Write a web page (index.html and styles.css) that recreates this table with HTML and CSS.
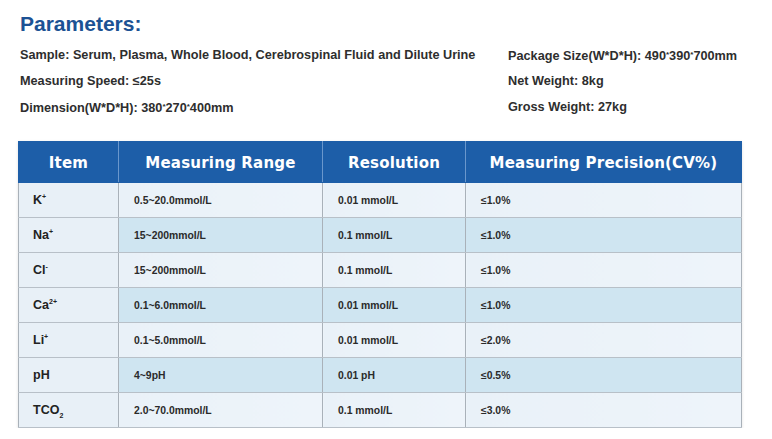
FILE: index.html
```html
<!DOCTYPE html>
<html lang="en">
<head>
<meta charset="utf-8">
<title>Parameters</title>
<link rel="stylesheet" href="styles.css">
</head>
<body>
<div class="page">
  <h1 class="title">Parameters:</h1>
  <div class="params">
    <div class="param">Sample: Serum, Plasma, Whole Blood, Cerebrospinal Fluid and Dilute Urine</div>
    <div class="param">Package Size(W*D*H): 490<span class="dot">*</span>390<span class="dot">*</span>700mm</div>
    <div class="param">Measuring Speed: ≤25s</div>
    <div class="param">Net Weight: 8kg</div>
    <div class="param">Dimension(W*D*H): 380<span class="dot">*</span>270<span class="dot">*</span>400mm</div>
    <div class="param">Gross Weight: 27kg</div>
  </div>
  <table class="spec">
    <colgroup>
      <col class="c1"><col class="c2"><col class="c3"><col class="c4">
    </colgroup>
    <thead>
      <tr><th>Item</th><th>Measuring Range</th><th>Resolution</th><th>Measuring Precision(CV%)</th></tr>
    </thead>
    <tbody>
      <tr class="odd"><td class="item">K<sup>+</sup></td><td>0.5~20.0mmol/L</td><td>0.01 mmol/L</td><td>≤1.0%</td></tr>
      <tr class="even"><td class="item">Na<sup>+</sup></td><td>15~200mmol/L</td><td>0.1 mmol/L</td><td>≤1.0%</td></tr>
      <tr class="odd"><td class="item">Cl<sup>-</sup></td><td>15~200mmol/L</td><td>0.1 mmol/L</td><td>≤1.0%</td></tr>
      <tr class="even"><td class="item">Ca<sup>2+</sup></td><td>0.1~6.0mmol/L</td><td>0.01 mmol/L</td><td>≤1.0%</td></tr>
      <tr class="odd"><td class="item">Li<sup>+</sup></td><td>0.1~5.0mmol/L</td><td>0.01 mmol/L</td><td>≤2.0%</td></tr>
      <tr class="even"><td class="item">pH</td><td>4~9pH</td><td>0.01 pH</td><td>≤0.5%</td></tr>
      <tr class="odd"><td class="item">TCO<sub>2</sub></td><td>2.0~70.0mmol/L</td><td>0.1 mmol/L</td><td>≤3.0%</td></tr>
    </tbody>
  </table>
</div>
</body>
</html>
```
FILE: styles.css
```css
html, body {
  margin: 0;
  padding: 0;
  background: #ffffff;
}

.page {
  padding: 10px 0 0 20px;
  font-family: "Liberation Sans", Arial, sans-serif;
  color: #2b2b2b;
}

.title {
  margin: 0;
  font-family: "Liberation Sans", Arial, sans-serif;
  font-weight: bold;
  font-size: 21px;
  line-height: 28px;
  color: #1c5294;
}

.params {
  display: grid;
  grid-template-columns: 488px auto;
  grid-auto-rows: 26px;
  margin-top: 4px;
}

.param {
  font-size: 12.7px;
  font-weight: bold;
  line-height: 26px;
  color: #2e2e2e;
  white-space: nowrap;
}

.dot {
  font-size: 8px;
  vertical-align: 3px;
}

.spec {
  margin: 21px 0 0 -2px;
  width: 723px;
  border-collapse: collapse;
  table-layout: fixed;
  box-shadow: 0 1px 3px rgba(0, 0, 0, 0.12);
}

.c1 { width: 100px; }
.c2 { width: 204px; }
.c3 { width: 143px; }
.c4 { width: 276px; }

.spec th {
  height: 38px;
  padding: 2px 0 0;
  background: #1d5ea8;
  color: #ffffff;
  font-family: "DejaVu Sans", sans-serif;
  font-weight: bold;
  font-size: 15px;
  letter-spacing: 0.2px;
  text-align: center;
  border: 1px solid #1d5ea8;
  border-left-color: #6a97cc;
  border-right-color: #6a97cc;
}

.spec th:first-child { border-left-color: #1d5ea8; }
.spec th:last-child { border-right-color: #1d5ea8; }

.spec td {
  height: 34px;
  padding: 0 0 0 15px;
  font-size: 10.4px;
  font-weight: bold;
  color: #2a2a2a;
  border: 1px solid #b8c0c8;
  border-left-color: #a9b1b9;
  border-right-color: #a9b1b9;
}

.spec tr.odd td {
  background: linear-gradient(to right, #e9f1f8, #eef4fa);
}

.spec tr.even td {
  background: #cfe5f1;
}

.spec td.item,
.spec tr.even td.item,
.spec tr.odd td.item {
  background: #e8f0f7;
  font-size: 12.5px;
  padding-left: 14px;
  color: #222222;
}

.spec td.item sup {
  font-size: 7px;
  vertical-align: 5px;
  line-height: 0;
}

.spec td.item sub {
  font-size: 7px;
  vertical-align: -4px;
  line-height: 0;
}
```
